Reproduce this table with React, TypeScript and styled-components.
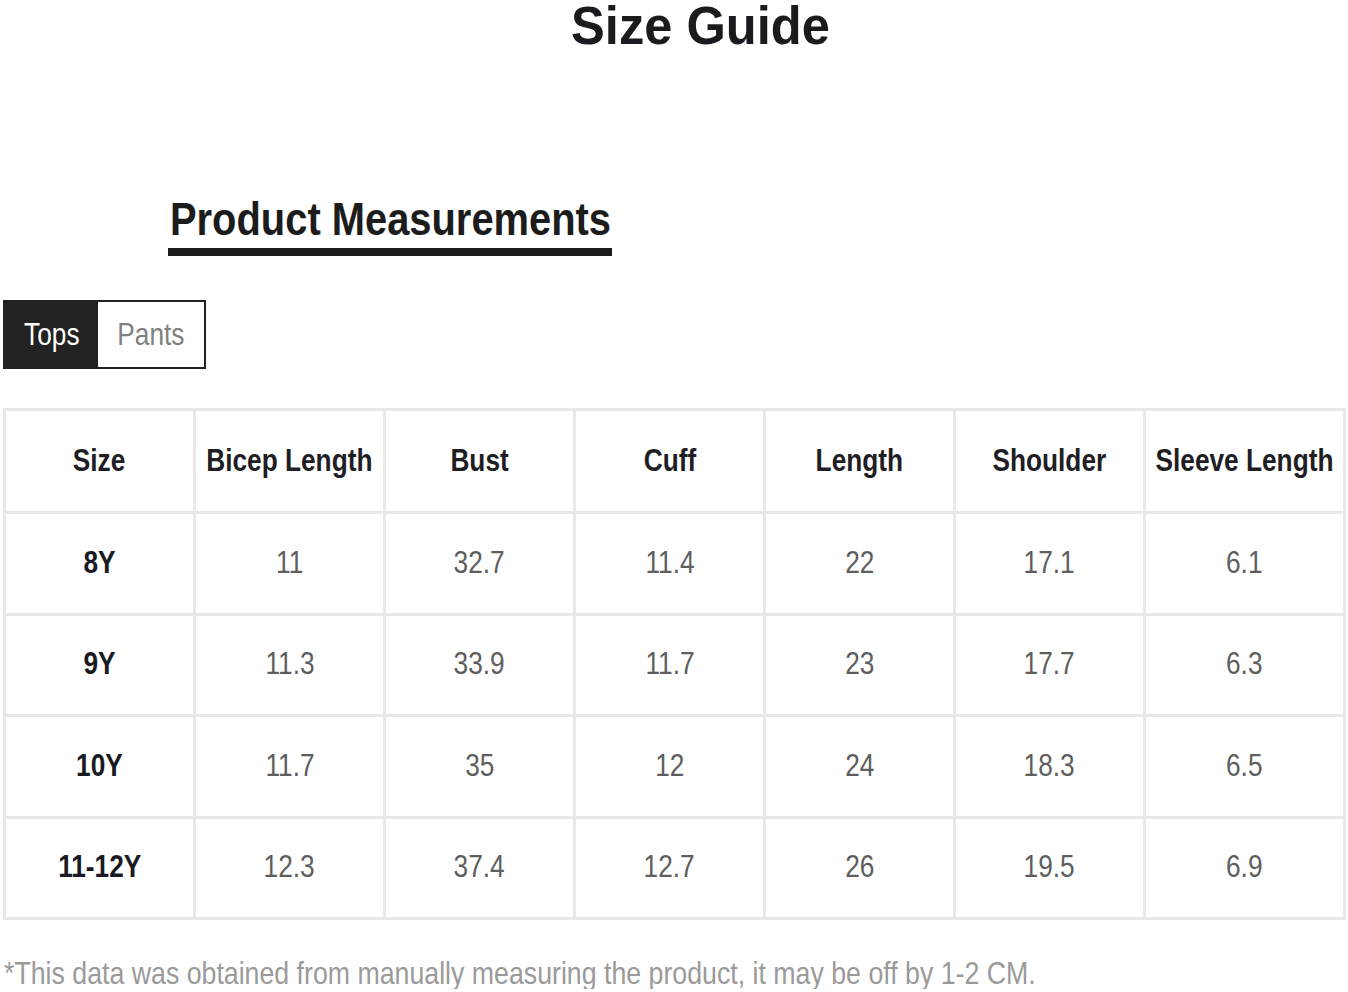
import React from "react";
import styled, { createGlobalStyle } from "styled-components";

const GlobalStyle = createGlobalStyle`
  html, body {
    margin: 0;
    padding: 0;
    background: #ffffff;
  }
  body {
    font-family: "Liberation Sans", Arial, sans-serif;
    color: #222;
  }
`;

const FONT = `"Liberation Sans", Arial, Helvetica, sans-serif`;

/* The reference uses a condensed grotesque; narrow the Arial-metric face. */
const Squeeze = styled.span<{ $scale?: number; $origin?: string }>`
  display: inline-block;
  white-space: nowrap;
  transform: scaleX(${(p) => p.$scale ?? 0.82});
  transform-origin: ${(p) => p.$origin ?? "center"};
`;

const Page = styled.div`
  width: 1348px;
  display: flex;
  flex-direction: column;
  align-items: flex-start;
`;

const Title = styled.h1`
  align-self: stretch;
  margin: 0;
  padding-top: 2px;
  padding-left: 52px;
  text-align: center;
  font-family: ${FONT};
  font-weight: 700;
  font-size: 53px;
  line-height: 48px;
  color: #1a1a1f;
`;

const SectionHeading = styled.h2`
  width: 441px;
  margin: 145px 0 0 168px;
  padding: 0 1px 4px 2px;
  border-bottom: 8px solid #1c1c1c;
  font-family: ${FONT};
  font-weight: 700;
  font-size: 46px;
  line-height: 49px;
  color: #1c1c1c;
  white-space: nowrap;
`;

const Tabs = styled.div`
  display: flex;
  margin: 44px 0 0 3px;
  border: 2px solid #222;
`;

const Tab = styled.button<{ $active?: boolean; $w: number }>`
  display: flex;
  align-items: center;
  justify-content: center;
  width: ${(p) => p.$w}px;
  height: 65px;
  padding: 0;
  border: none;
  margin: 0;
  background: ${(p) => (p.$active ? "#222222" : "#ffffff")};
  color: ${(p) => (p.$active ? "#ffffff" : "#808080")};
  font-family: ${FONT};
  font-weight: 400;
  font-size: 32px;
  cursor: pointer;
`;

const Table = styled.table`
  margin: 39px 0 0 3px;
  width: 1340px;
  border-collapse: collapse;
  table-layout: fixed;
  font-family: ${FONT};
`;

const HeadRow = styled.tr`
  height: 103px;
`;

const BodyRow = styled.tr`
  height: 101.5px;
`;

const HeadCell = styled.th`
  border: 3px solid #e8e8e8;
  padding: 0;
  font-weight: 700;
  font-size: 32px;
  color: #1e1e24;
`;

const Cell = styled.td<{ $strong?: boolean }>`
  border: 3px solid #e8e8e8;
  padding: 0;
  font-weight: ${(p) => (p.$strong ? 700 : 400)};
  font-size: 32px;
  color: ${(p) => (p.$strong ? "#1a1a22" : "#5e5e5e")};
`;

const CellInner = styled.div`
  display: flex;
  justify-content: center;
  align-items: center;
  padding-bottom: 2px;
`;

const Note = styled.p`
  margin: 37px 0 0 4px;
  font-family: ${FONT};
  font-size: 32px;
  line-height: 32px;
  color: #9a9a9a;
  white-space: nowrap;
`;

const headers = [
  "Size",
  "Bicep Length",
  "Bust",
  "Cuff",
  "Length",
  "Shoulder",
  "Sleeve Length",
];

const widths = [190, 190, 190, 190, 190, 190, 200];

const rows = [
  ["8Y", "11", "32.7", "11.4", "22", "17.1", "6.1"],
  ["9Y", "11.3", "33.9", "11.7", "23", "17.7", "6.3"],
  ["10Y", "11.7", "35", "12", "24", "18.3", "6.5"],
  ["11-12Y", "12.3", "37.4", "12.7", "26", "19.5", "6.9"],
];

export default function App() {
  return (
    <>
      <GlobalStyle />
      <Page>
        <Title>
          <Squeeze $scale={0.955}>Size Guide</Squeeze>
        </Title>
        <SectionHeading>
          <Squeeze $scale={0.867} $origin="left">
            Product Measurements
          </Squeeze>
        </SectionHeading>
        <Tabs>
          <Tab $active $w={93}>
            <Squeeze>Tops</Squeeze>
          </Tab>
          <Tab $w={106}>
            <Squeeze>Pants</Squeeze>
          </Tab>
        </Tabs>
        <Table>
          <colgroup>
            {widths.map((w, i) => (
              <col key={i} style={{ width: w }} />
            ))}
          </colgroup>
          <thead>
            <HeadRow>
              {headers.map((h) => (
                <HeadCell key={h}>
                  <CellInner>
                    <Squeeze>{h}</Squeeze>
                  </CellInner>
                </HeadCell>
              ))}
            </HeadRow>
          </thead>
          <tbody>
            {rows.map((r) => (
              <BodyRow key={r[0]}>
                {r.map((v, i) => (
                  <Cell key={i} $strong={i === 0}>
                    <CellInner>
                      <Squeeze>{v}</Squeeze>
                    </CellInner>
                  </Cell>
                ))}
              </BodyRow>
            ))}
          </tbody>
        </Table>
        <Note>
          <Squeeze $scale={0.835} $origin="left">
            *This data was obtained from manually measuring the product, it may
            be off by 1-2 CM.
          </Squeeze>
        </Note>
      </Page>
    </>
  );
}
